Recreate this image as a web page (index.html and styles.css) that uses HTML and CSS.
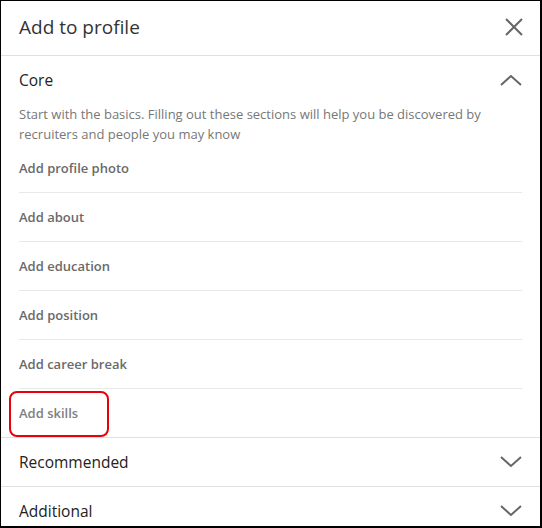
FILE: index.html
```html
<!DOCTYPE html>
<html>
<head>
<meta charset="utf-8">
<link rel="stylesheet" href="styles.css">
</head>
<body>
<div class="frame">
  <header class="modal-header">
    <h1 class="title">Add to profile</h1>
    <svg class="close" width="18" height="18" viewBox="0 0 18 18"><path d="M1 1 L17 17 M17 1 L1 17" stroke="#666" stroke-width="2" fill="none"/></svg>
  </header>
  <section class="section">
    <div class="section-head">
      <span class="section-title">Core</span>
      <svg class="chev" width="22" height="12" viewBox="0 0 22 12"><path d="M1 11 L11 2 L21 11" stroke="#666" stroke-width="2" fill="none"/></svg>
    </div>
    <p class="desc">Start with the basics. Filling out these sections will help you be discovered by recruiters and people you may know</p>
    <ul class="items">
      <li class="item">Add profile photo</li>
      <li class="item">Add about</li>
      <li class="item">Add education</li>
      <li class="item">Add position</li>
      <li class="item">Add career break</li>
      <li class="item item-hl">Add skills<span class="highlight"></span></li>
    </ul>
  </section>
  <section class="section">
    <div class="section-head">
      <span class="section-title">Recommended</span>
      <svg class="chev" width="22" height="12" viewBox="0 0 22 12"><path d="M1 1 L11 10 L21 1" stroke="#666" stroke-width="2" fill="none"/></svg>
    </div>
  </section>
  <section class="section">
    <div class="section-head">
      <span class="section-title">Additional</span>
      <svg class="chev" width="22" height="12" viewBox="0 0 22 12"><path d="M1 1 L11 10 L21 1" stroke="#666" stroke-width="2" fill="none"/></svg>
    </div>
  </section>
</div>
</body>
</html>
```
FILE: styles.css
```css
html, body {
  margin: 0;
  padding: 0;
  background: #fff;
}
.frame {
  width: 542px;
  height: 528px;
  box-sizing: border-box;
  border-style: solid;
  border-color: #000;
  border-width: 1px 2px 2px 1px;
  overflow: hidden;
  font-family: "Open Sans", "Noto Sans", sans-serif;
  background: #fff;
}
.modal-header {
  height: 54px;
  border-bottom: 1px solid #e0e0e0;
  display: flex;
  align-items: flex-start;
  justify-content: space-between;
  padding: 0 17px 0 18px;
}
.title {
  margin: 13px 0 0;
  font-size: 19px;
  line-height: 26px;
  font-weight: 400;
  color: #333;
}
.close {
  display: block;
  margin-top: 17px;
}
.section {
  border-bottom: 1px solid #e0e0e0;
}
.section-head {
  height: 48px;
  display: flex;
  align-items: center;
  justify-content: space-between;
  padding: 0 18px;
}
.section-title {
  font-size: 15.5px;
  color: #222;
}
.chev {
  display: block;
}
.desc {
  margin: 0;
  padding: 0 18px;
  font-size: 13px;
  line-height: 20px;
  color: #777;
}
.items {
  list-style: none;
  margin: 0;
  padding: 0 18px;
}
.item {
  height: 48px;
  display: flex;
  align-items: center;
  font-size: 13px;
  font-weight: 600;
  color: #6a6a6a;
  border-bottom: 1px solid #e8e8e8;
  position: relative;
}
.item:last-child {
  border-bottom: none;
}
.item-hl {
  color: #808080;
}
.highlight {
  position: absolute;
  left: -10px;
  top: 2px;
  width: 100px;
  height: 46px;
  box-sizing: border-box;
  border: 2.5px solid #e8000b;
  border-radius: 8px;
}
```
